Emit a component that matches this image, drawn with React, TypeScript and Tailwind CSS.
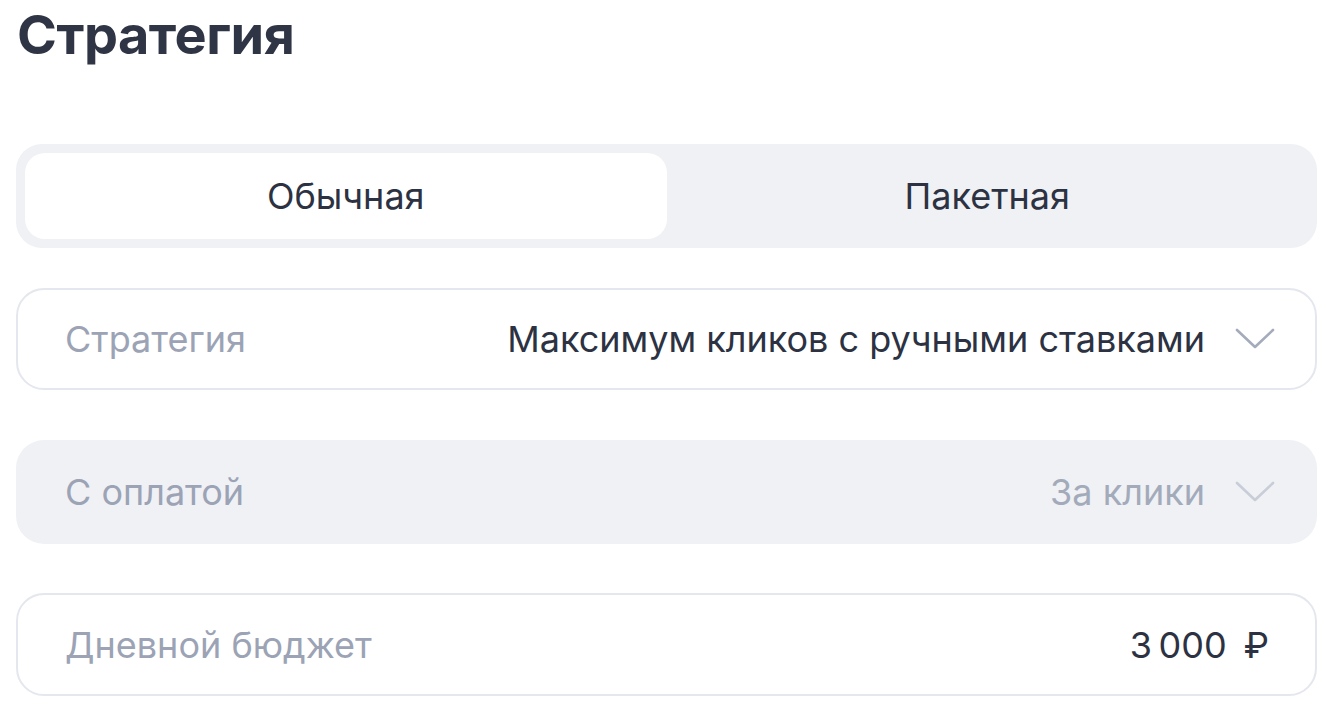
import React from "react";

function Chevron({ color }: { color: string }) {
  return (
    <svg width="40" height="22" viewBox="0 0 40 22" fill="none" className="shrink-0">
      <path d="M2 2 L20 19 L38 2" stroke={color} strokeWidth="2.6" strokeLinecap="round" strokeLinejoin="round" />
    </svg>
  );
}

export default function App() {
  return (
    <div
      className="w-[1340px] h-[714px] bg-white overflow-hidden"
      style={{ fontFamily: "Inter, 'Noto Sans', sans-serif" }}
    >
      <h1 className="pl-[17px] pt-[2px] text-[54px] leading-[66px] font-bold text-[#2f3545] tracking-[-0.5px]">
        Стратегия
      </h1>

      <div className="pl-[16px] pr-[23px] mt-[76px] w-[1340px]">
        <div className="h-[104px] rounded-[26px] bg-[#f0f1f5] p-[9px] flex">
          <div className="flex-1 rounded-[20px] bg-white flex items-center justify-center text-[36px] text-[#2c3242]">
            Обычная
          </div>
          <div className="flex-1 flex items-center justify-center text-[36px] text-[#2c3242]">
            Пакетная
          </div>
        </div>

        <div className="mt-[40px] h-[102px] rounded-[28px] border-2 border-[#e5e7ee] flex items-center pl-[47px] pr-[40px]">
          <span className="text-[36px] text-[#9ba3b5]">Стратегия</span>
          <span className="ml-auto text-[36px] text-[#2c3242]">Максимум кликов с ручными ставками</span>
          <span className="ml-[30px]"><Chevron color="#a4acbc" /></span>
        </div>

        <div className="mt-[50px] h-[104px] rounded-[28px] bg-[#f0f1f5] flex items-center pl-[49px] pr-[42px]">
          <span className="text-[36px] text-[#9ba3b5]">С оплатой</span>
          <span className="ml-auto text-[36px] text-[#a3abbb]">За клики</span>
          <span className="ml-[30px]"><Chevron color="#c9cdd7" /></span>
        </div>

        <div className="mt-[49px] h-[103px] rounded-[28px] border-2 border-[#e5e7ee] flex items-center pl-[47px] pr-[46px]">
          <span className="text-[36px] text-[#9ba3b5]">Дневной бюджет</span>
          <span className="ml-auto text-[36px] text-[#2c3242]">3&#8201;000</span>
          <span className="ml-[17px] text-[36px] text-[#2c3242]">₽</span>
        </div>
      </div>
    </div>
  );
}
